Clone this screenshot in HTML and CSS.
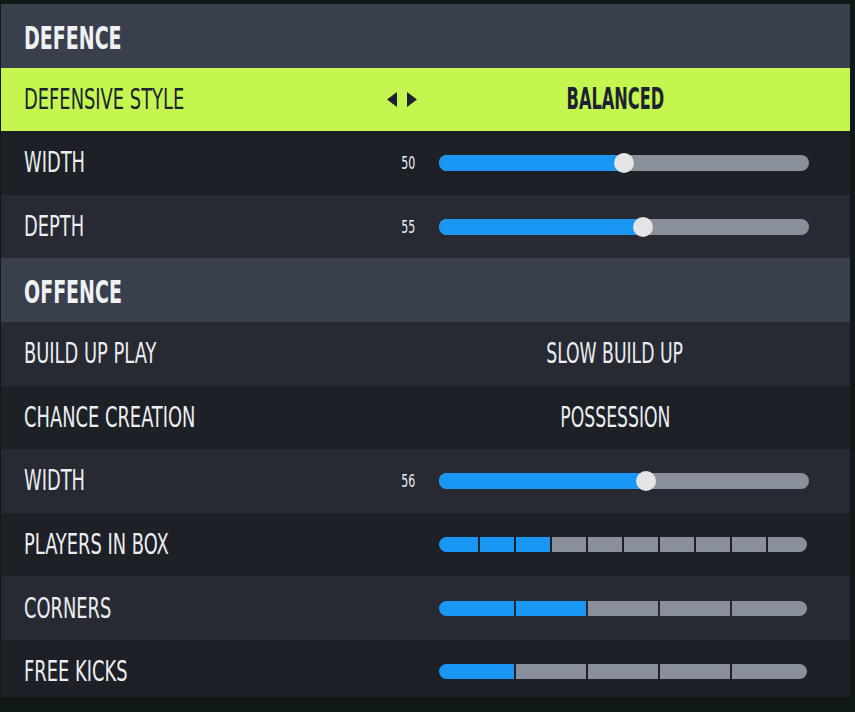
FILE: index.html
```html
<!DOCTYPE html>
<html lang="en">
<head>
<meta charset="utf-8">
<title>Tactics</title>
<link rel="stylesheet" href="styles.css">
</head>
<body>
<div class="panel">
  <div class="row head"><span class="txt">DEFENCE</span></div>

  <div class="row active">
    <span class="label"><span class="txt">DEFENSIVE STYLE</span></span>
    <span class="aux">
      <svg class="arrows" width="30" height="15" viewBox="0 0 30 15"><polygon points="10,0 0,7.5 10,15"/><polygon points="20,0 30,7.5 20,15"/></svg>
    </span>
    <span class="value strong"><span class="txt">BALANCED</span></span>
  </div>

  <div class="row dark">
    <span class="label"><span class="txt">WIDTH</span></span>
    <span class="aux"><span class="num">50</span></span>
    <div class="slider"><div class="fill" style="width:50%"><span class="knob"></span></div></div>
  </div>

  <div class="row light">
    <span class="label"><span class="txt">DEPTH</span></span>
    <span class="aux"><span class="num">55</span></span>
    <div class="slider"><div class="fill" style="width:55%"><span class="knob"></span></div></div>
  </div>

  <div class="row head"><span class="txt">OFFENCE</span></div>

  <div class="row light">
    <span class="label"><span class="txt">BUILD UP PLAY</span></span>
    <span class="aux"></span>
    <span class="value"><span class="txt">SLOW BUILD UP</span></span>
  </div>

  <div class="row dark">
    <span class="label"><span class="txt">CHANCE CREATION</span></span>
    <span class="aux"></span>
    <span class="value"><span class="txt">POSSESSION</span></span>
  </div>

  <div class="row light">
    <span class="label"><span class="txt">WIDTH</span></span>
    <span class="aux"><span class="num">56</span></span>
    <div class="slider"><div class="fill" style="width:56%"><span class="knob"></span></div></div>
  </div>

  <div class="row dark">
    <span class="label"><span class="txt">PLAYERS IN BOX</span></span>
    <span class="aux"></span>
    <div class="segs">
      <span class="seg on"></span><span class="seg on"></span><span class="seg on"></span><span class="seg"></span><span class="seg"></span><span class="seg"></span><span class="seg"></span><span class="seg"></span><span class="seg"></span><span class="seg"></span>
    </div>
  </div>

  <div class="row light">
    <span class="label"><span class="txt">CORNERS</span></span>
    <span class="aux"></span>
    <div class="segs">
      <span class="seg on"></span><span class="seg on"></span><span class="seg"></span><span class="seg"></span><span class="seg"></span>
    </div>
  </div>

  <div class="row dark">
    <span class="label"><span class="txt">FREE KICKS</span></span>
    <span class="aux"></span>
    <div class="segs">
      <span class="seg on"></span><span class="seg"></span><span class="seg"></span><span class="seg"></span><span class="seg"></span>
    </div>
  </div>
</div>
</body>
</html>
```
FILE: styles.css
```css
html, body {
  margin: 0;
  padding: 0;
}
body {
  background: #111917;
  width: 855px;
  height: 712px;
  overflow: hidden;
  font-family: "DejaVu Sans Condensed", "DejaVu Sans", sans-serif;
  font-stretch: condensed;
  color: #eceef1;
}
.panel {
  margin: 4px 0 0 1px;
  width: 849px;
  height: 693px;
  overflow: hidden;
  display: flex;
  flex-direction: column;
}
.row {
  flex: 0 0 63.6px;
  height: 63.6px;
  box-sizing: border-box;
  display: grid;
  grid-template-columns: 1fr 40px 370px;
  column-gap: 22px;
  align-items: center;
  padding: 0 41px 0 23px;
}
.row.head {
  display: flex;
  background: #393f4c;
  font-size: 32px;
  font-weight: bold;
  color: #f0f1f3;
  padding-top: 4px;
}
.row.head .txt {
  transform: scaleX(0.66);
}
.row.active {
  background: #c4f64f;
  color: #1c2233;
}
.row.dark { background: #1d2027; }
.row.light { background: #272a33; }

.txt {
  display: inline-block;
  white-space: nowrap;
  transform: scaleX(0.685);
  transform-origin: left center;
}
.label {
  font-size: 29px;
  line-height: 1;
}
.aux {
  display: flex;
  justify-content: flex-end;
  align-items: center;
}
.arrows {
  display: block;
  fill: #1c2233;
}
.num {
  display: inline-block;
  font-size: 18px;
  line-height: 1;
  padding-right: 2px;
  transform: scaleX(0.68);
  transform-origin: right center;
}
.value {
  font-size: 29px;
  line-height: 1;
  text-align: center;
  padding-right: 18px;
}
.value .txt {
  transform: scaleX(0.66);
  transform-origin: center center;
}
.value.strong {
  font-weight: bold;
  font-size: 30px;
}
.value.strong .txt {
  transform: scaleX(0.6);
}
.slider {
  position: relative;
  height: 16px;
  border-radius: 8px;
  background: #8a909b;
}
.fill {
  position: relative;
  height: 100%;
  border-radius: 8px 0 0 8px;
  background: #1a97f5;
}
.knob {
  position: absolute;
  right: -10px;
  top: -2px;
  width: 20px;
  height: 20px;
  border-radius: 50%;
  background: #e4e4e6;
}
.segs {
  display: flex;
  gap: 2px;
  width: 368px;
  height: 15px;
}
.seg {
  flex: 1 1 0;
  background: #8a909b;
}
.seg:first-child {
  flex-basis: 5px;
  border-radius: 7.5px 0 0 7.5px;
}
.seg:last-child {
  flex-basis: 5px;
  border-radius: 0 7.5px 7.5px 0;
}
.seg.on { background: #1a97f5; }
```
